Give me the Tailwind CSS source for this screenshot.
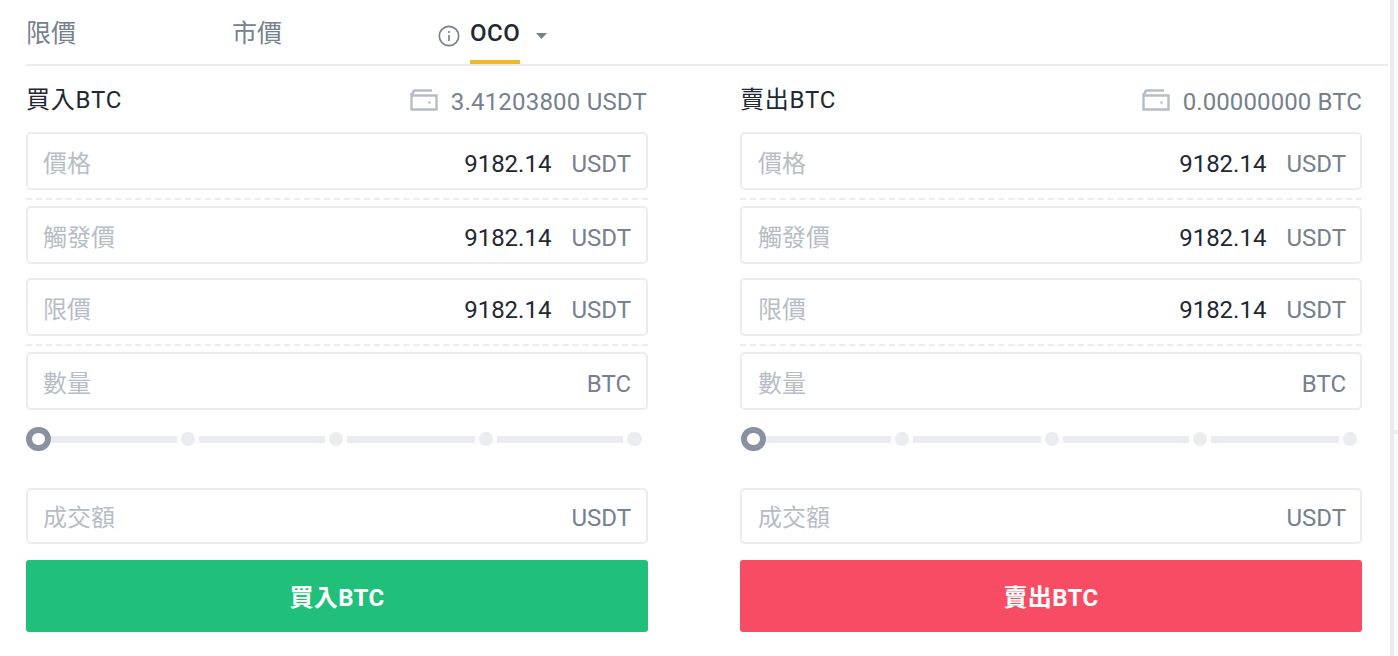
<!DOCTYPE html>
<html lang="zh-Hant">
<head>
<meta charset="utf-8">
<script src="https://cdn.jsdelivr.net/npm/@tailwindcss/browser@4"></script>
</head>
<body class="bg-white overflow-hidden">
<div class="flex w-[1398px] h-[656px] overflow-hidden font-['Roboto','Noto_Sans_CJK_TC',sans-serif] text-[24px] leading-[32px] text-[#76808f]">
  <main class="w-[1362px] ml-[26px] shrink-0">
    <nav class="flex h-[66px] border-b-2 border-[#eaecef]">
      <span class="w-[206px] pt-[18px] text-[25px]">限價</span>
      <span class="w-[206px] pt-[18px] text-[25px]">市價</span>
      <span class="flex h-[64px] items-start pt-[25px]">
        <svg class="w-[22px] h-[22px] mr-2.5" viewBox="0 0 22 22" fill="none" stroke="#76808f" stroke-width="1.7"><circle cx="11" cy="11" r="9.7"/><path d="M11 10v6M11 6v2" stroke-width="1.6"/></svg>
        <span class="relative -mt-2 h-[47px] font-medium text-[#212833] tracking-[0.5px]">OCO<span class="absolute left-0 right-0 top-[43px] h-1 bg-[#f3b72b]"></span></span>
        <svg class="w-[11px] h-[6px] ml-4 mt-[8px]" viewBox="0 0 11 6" fill="#76808f"><path d="M0 0h11L5.500 6z"/></svg>
      </span>
    </nav>
    <div class="grid grid-cols-[622px_622px] gap-x-[92px]">
      <!-- 買入 -->
      <section>
        <header class="flex justify-between h-[66px] pt-[18px]">
          <span class="text-[#212833] tracking-[0.8px]">買入BTC</span>
          <span class="flex items-start pt-[2px] pr-px tracking-[0.2px]">
            <svg class="w-[28px] h-[22px] mr-[13px] mt-[3px]" viewBox="0 0 28 22" fill="none" stroke="#b7bdc6" stroke-width="2.400"><path d="M3 5V3.500A2 2 0 0 1 5 1.500h17M1.500 6.500h25v14h-25zM1.500 6.500V4"/><circle cx="19.500" cy="13.500" r="1.300" fill="#b7bdc6" stroke="none"/></svg>
            3.41203800 USDT
          </span>
        </header>
        <div class="flex items-center h-[58px] pt-[6px] px-[15px] border-2 border-[#eaecef] rounded-[5px]"><span class="flex-1 text-[#b7bdc6]">價格</span><span class="text-[#212833] mr-5">9182.14</span><span>USDT</span></div>
        <div class="mt-2 mb-[6px] border-t-2 border-dashed border-[#eaecef]"></div>
        <div class="flex items-center h-[58px] pt-[6px] px-[15px] border-2 border-[#eaecef] rounded-[5px]"><span class="flex-1 text-[#b7bdc6]">觸發價</span><span class="text-[#212833] mr-5">9182.14</span><span>USDT</span></div>
        <div class="flex items-center h-[58px] mt-[14px] pt-[6px] px-[15px] border-2 border-[#eaecef] rounded-[5px]"><span class="flex-1 text-[#b7bdc6]">限價</span><span class="text-[#212833] mr-5">9182.14</span><span>USDT</span></div>
        <div class="mt-[8px] mb-[6px] border-t-2 border-dashed border-[#eaecef]"></div>
        <div class="flex items-center h-[58px] pt-[6px] px-[15px] border-2 border-[#eaecef] rounded-[5px]"><span class="flex-1 text-[#b7bdc6]">數量</span><span>BTC</span></div>
        <div class="flex items-center h-[24px] mt-[17px]">
          <span class="w-[25px] h-[24px] rounded-full border-[6px] border-[#8a92a2] bg-white"></span>
          <span class="w-[126px] h-[7px] bg-[#eaecef]"></span>
          <span class="w-[14px] h-[14px] mx-[4px] rounded-full bg-[#eaecef]"></span>
          <span class="w-[126px] h-[7px] bg-[#eaecef]"></span>
          <span class="w-[14px] h-[14px] mx-[4px] rounded-full bg-[#eaecef]"></span>
          <span class="w-[128px] h-[7px] bg-[#eaecef]"></span>
          <span class="w-[14px] h-[14px] mx-[4px] rounded-full bg-[#eaecef]"></span>
          <span class="w-[126px] h-[7px] bg-[#eaecef]"></span>
          <span class="w-[15px] h-[14px] ml-[4px] rounded-full bg-[#eaecef]"></span>
        </div>
        <div class="flex items-center h-[56px] mt-[37px] pt-[4px] px-[15px] border-2 border-[#eaecef] rounded-[5px]"><span class="flex-1 text-[#b7bdc6]">成交額</span><span>USDT</span></div>
        <button class="block w-full h-[72px] mt-4 pt-1 rounded-[3px] bg-[#20c07a] text-white font-bold tracking-[0.4px]">買入BTC</button>
      </section>
      <!-- 賣出 -->
      <section>
        <header class="flex justify-between h-[66px] pt-[18px]">
          <span class="text-[#212833] tracking-[0.8px]">賣出BTC</span>
          <span class="flex items-start pt-[2px] tracking-[0.1px]">
            <svg class="w-[28px] h-[22px] mr-[13px] mt-[3px]" viewBox="0 0 28 22" fill="none" stroke="#b7bdc6" stroke-width="2.400"><path d="M3 5V3.500A2 2 0 0 1 5 1.500h17M1.500 6.500h25v14h-25zM1.500 6.500V4"/><circle cx="19.500" cy="13.500" r="1.300" fill="#b7bdc6" stroke="none"/></svg>
            0.00000000 BTC
          </span>
        </header>
        <div class="flex items-center h-[58px] pt-[6px] pl-4 pr-[14px] border-2 border-[#eaecef] rounded-[5px]"><span class="flex-1 text-[#b7bdc6]">價格</span><span class="text-[#212833] mr-5">9182.14</span><span>USDT</span></div>
        <div class="mt-2 mb-[6px] border-t-2 border-dashed border-[#eaecef]"></div>
        <div class="flex items-center h-[58px] pt-[6px] pl-4 pr-[14px] border-2 border-[#eaecef] rounded-[5px]"><span class="flex-1 text-[#b7bdc6]">觸發價</span><span class="text-[#212833] mr-5">9182.14</span><span>USDT</span></div>
        <div class="flex items-center h-[58px] mt-[14px] pt-[6px] pl-4 pr-[14px] border-2 border-[#eaecef] rounded-[5px]"><span class="flex-1 text-[#b7bdc6]">限價</span><span class="text-[#212833] mr-5">9182.14</span><span>USDT</span></div>
        <div class="mt-[8px] mb-[6px] border-t-2 border-dashed border-[#eaecef]"></div>
        <div class="flex items-center h-[58px] pt-[6px] pl-4 pr-[14px] border-2 border-[#eaecef] rounded-[5px]"><span class="flex-1 text-[#b7bdc6]">數量</span><span>BTC</span></div>
        <div class="flex items-center h-[24px] mt-[17px]">
          <span class="w-[25px] h-[24px] ml-px rounded-full border-[6px] border-[#8a92a2] bg-white"></span>
          <span class="w-[125px] h-[7px] bg-[#eaecef]"></span>
          <span class="w-[14px] h-[14px] mx-[4px] rounded-full bg-[#eaecef]"></span>
          <span class="w-[128px] h-[7px] bg-[#eaecef]"></span>
          <span class="w-[14px] h-[14px] mx-[4px] rounded-full bg-[#eaecef]"></span>
          <span class="w-[126px] h-[7px] bg-[#eaecef]"></span>
          <span class="w-[14px] h-[14px] mx-[4px] rounded-full bg-[#eaecef]"></span>
          <span class="w-[128px] h-[7px] bg-[#eaecef]"></span>
          <span class="w-[14px] h-[14px] ml-[4px] rounded-full bg-[#eaecef]"></span>
        </div>
        <div class="flex items-center h-[56px] mt-[37px] pt-[4px] pl-4 pr-[14px] border-2 border-[#eaecef] rounded-[5px]"><span class="flex-1 text-[#b7bdc6]">成交額</span><span>USDT</span></div>
        <button class="block w-full h-[72px] mt-4 pt-1 rounded-[3px] bg-[#f74c63] text-white font-bold tracking-[0.4px]">賣出BTC</button>
      </section>
    </div>
  </main>
  <aside class="relative w-1 h-full ml-[2px] bg-[#eaecef] shrink-0"><span class="absolute left-1 top-[430px] w-1 h-1 bg-[#eaecef]"></span></aside>
</div>
</body>
</html>
